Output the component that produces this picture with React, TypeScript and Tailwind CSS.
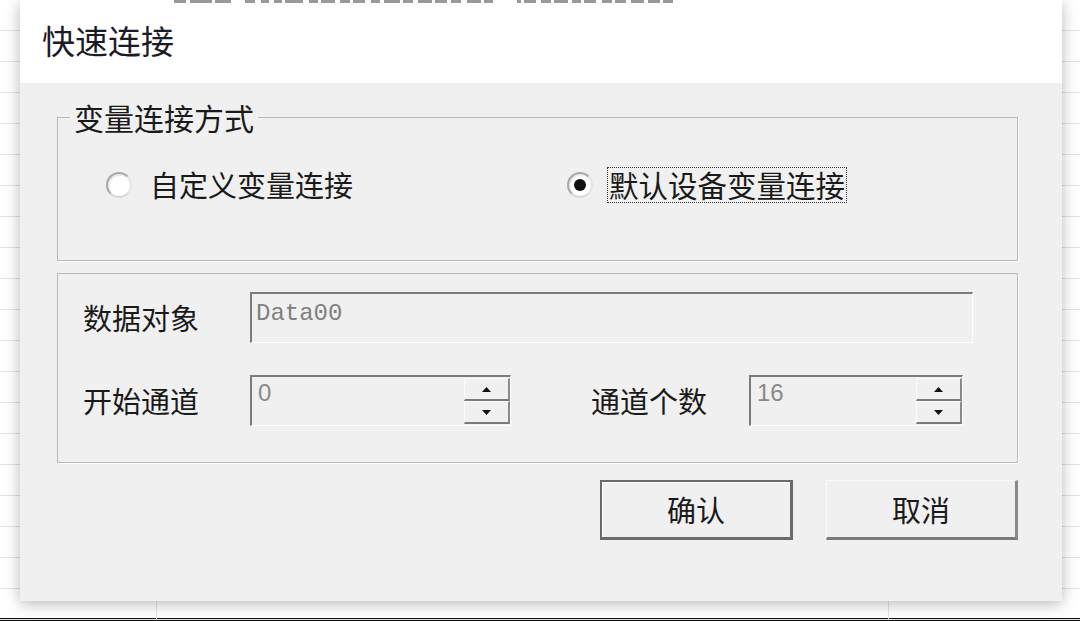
const cjk = "font-['Noto_Sans_CJK_SC','Noto_Sans_CJK_JP',sans-serif]";

// fragments of another window's text that peek over the dialog's top edge
const peek = [
  [6, 12], [4, 22], [3, 16], [14, 10], [6, 8], [5, 8], [3, 18], [6, 9], [3, 14], [5, 10],
  [3, 12], [6, 9], [4, 16], [3, 10], [5, 14], [3, 12], [4, 10], [6, 14], [3, 9], [24, 4],
  [3, 12], [5, 10], [3, 14], [4, 9], [3, 12], [6, 10], [3, 11], [5, 13], [4, 12], [3, 10],
];

function Radio({ checked }: { checked?: boolean }) {
  return (
    <span className="flex h-[26px] w-[26px] shrink-0 items-center justify-center rounded-full border-2 border-[#a8a8a8] border-r-[#e4e4e4] border-b-[#d8d8d8] bg-white shadow-[inset_1px_1px_2px_rgba(0,0,0,0.15)]">
      {checked && <span className="h-[12px] w-[12px] rounded-full bg-[#111]" />}
    </span>
  );
}

function Arrow({ up }: { up?: boolean }) {
  return (
    <svg width="9" height="5" viewBox="0 0 9 5">
      {up ? <polygon points="0,5 9,5 4.5,0" fill="#111" /> : <polygon points="0,0 9,0 4.5,5" fill="#111" />}
    </svg>
  );
}

function Spin({ value, width }: { value: string; width: string }) {
  return (
    <div className={`flex h-[51px] ${width} border-t-2 border-l-2 border-[#7c7c7c] border-r border-b border-r-[#fdfdfd] border-b-[#fdfdfd] bg-[#f0f0f0]`}>
      <div className="flex-1 pl-[6px] pt-[4px] font-['Liberation_Sans',sans-serif] text-[24px] leading-none text-[#8a8a8a]">{value}</div>
      <div className="flex w-[46px] flex-col py-[1px]">
        <div className="flex h-[23px] items-center justify-center border-t border-l border-[#fcfcfc] border-b-2 border-b-[#7a7a7a] border-r-2 border-r-[#8a8a8a] bg-[#f0f0f0]">
          <Arrow up />
        </div>
        <div className="flex h-[23px] items-center justify-center border-t border-l border-[#fcfcfc] border-b-2 border-b-[#7a7a7a] border-r-2 border-r-[#8a8a8a] bg-[#f0f0f0]">
          <Arrow />
        </div>
      </div>
    </div>
  );
}

export default function App() {
  const rows = Array.from({ length: 20 });
  return (
    <div className={`relative h-[621px] w-[1080px] overflow-hidden bg-white ${cjk}`}>
      {/* spreadsheet behind the dialog */}
      <div className="flex h-[618px] flex-col">
        {rows.map((_, i) => (
          <div key={i} className="flex h-[31px] shrink-0 border-b border-[#e2e2e2]">
            <div className="w-[157px] border-r border-[#e2e2e2]" />
            <div className="w-[732px] border-r border-[#e2e2e2]" />
            <div className="flex-1" />
          </div>
        ))}
      </div>
      <div className="h-[3px] bg-[#111]" />

      {/* dialog window */}
      <div className="absolute left-[20px] top-0 flex h-[601px] w-[1042px] flex-col bg-[#f0f0f0] shadow-[0_3px_14px_rgba(0,0,0,0.28)]">
        <div className="flex h-[83px] flex-col bg-white">
          <div className="flex h-[5px] items-start pl-[148px]">
            {peek.map(([gap, w], i) => (
              <div key={i} className="h-[3px] bg-[#555] opacity-60" style={{ marginLeft: gap, width: w }} />
            ))}
          </div>
          <div className="pl-[22px] pt-[19px] text-[33px] leading-none text-[#1c1c28]">快速连接</div>
        </div>

        <div className="flex flex-1 flex-col pl-[37px] pr-[44px] pt-[19px]">
          <fieldset className="h-[159px] border border-[#b9b9b9] px-0 pt-0 shadow-[1px_1px_0_#fff]">
            <legend className="ml-[12px] px-[4px] text-[30px] leading-none text-[#1a1a1a]">变量连接方式</legend>
            <div className="flex items-center pt-[35px]">
              <div className="flex items-center pl-[48px]">
                <Radio />
                <span className="ml-[18px] text-[29px] leading-none text-[#1a1a1a]">自定义变量连接</span>
              </div>
              <div className="ml-[214px] flex items-center">
                <Radio checked />
                <span className="ml-[14px] border border-dotted border-[#333] px-[1px] py-[2px] text-[29.5px] leading-none text-[#1a1a1a]">默认设备变量连接</span>
              </div>
            </div>
          </fieldset>

          <div className="mt-[12px] flex h-[190px] flex-col border border-[#b9b9b9] pl-[25px] pt-[18px] shadow-[1px_1px_0_#fff]">
            <div className="flex items-center">
              <span className="w-[167px] text-[29px] leading-none text-[#1a1a1a]">数据对象</span>
              <div className="flex h-[51px] w-[723px] border-t-2 border-l-2 border-[#7c7c7c] border-r border-b border-r-[#fdfdfd] border-b-[#fdfdfd] bg-[#f0f0f0] pl-[4px] pt-[8px] font-['Liberation_Mono',monospace] text-[24px] leading-none text-[#808080]">
                Data00
              </div>
            </div>
            <div className="mt-[32px] flex items-center">
              <span className="w-[167px] text-[29px] leading-none text-[#1a1a1a]">开始通道</span>
              <Spin value="0" width="w-[261px]" />
              <span className="ml-[80px] w-[158px] text-[29px] leading-none text-[#1a1a1a]">通道个数</span>
              <Spin value="16" width="w-[214px]" />
            </div>
          </div>

          <div className="mt-[17px] flex justify-end gap-[33px]">
            <button className="flex h-[60px] w-[193px] items-center justify-center border-2 border-[#6a6a6a] border-b-[3px] border-r-[3px] bg-[#f0f0f0] text-[29px] leading-none text-[#1a1a1a] shadow-[inset_1px_1px_0_#fff]">
              确认
            </button>
            <button className="flex h-[60px] w-[192px] items-center justify-center border border-[#fafafa] border-b-[3px] border-r-[3px] border-b-[#7a7a7a] border-r-[#8a8a8a] bg-[#f0f0f0] text-[29px] leading-none text-[#1a1a1a]">
              取消
            </button>
          </div>
        </div>
      </div>
    </div>
  );
}
